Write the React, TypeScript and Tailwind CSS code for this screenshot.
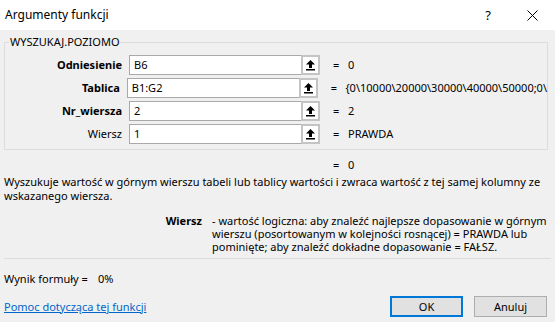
import type { ReactNode } from 'react'

const rows = [
  { label: 'Odniesienie', bold: true, value: 'B6', result: '0' },
  { label: 'Tablica', bold: true, value: 'B1:G2', result: '{0\\10000\\20000\\30000\\40000\\50000;0\\' },
  { label: 'Nr_wiersza', bold: true, value: '2', result: '2' },
  { label: 'Wiersz', bold: false, value: '1', result: 'PRAWDA' },
]

function CollapseIcon() {
  return (
    <svg width="11" height="12" viewBox="0 0 11 12" className="block">
      <path d="M5.5 1 L10 5.5 L7 5.5 L7 9 L4 9 L4 5.5 L1 5.5 Z" fill="#000" />
      <rect x="1" y="10" width="9" height="1.5" fill="#000" />
    </svg>
  )
}

function ArgRow({ label, bold, value, result }: { label: string; bold: boolean; value: string; result: ReactNode }) {
  return (
    <div className="flex items-center h-[20px]">
      <div className={`w-[124px] text-right pr-[7px] ${bold ? 'font-bold' : ''}`}>{label}</div>
      <div className="flex h-[20px]">
        <div className="w-[172px] h-full bg-white border border-[#a9a9a9] border-r-0 flex items-center px-[4px]">
          {value}
        </div>
        <div className="w-[19px] h-full bg-white border-2 border-[#c4c4c4] grid place-items-center">
          <CollapseIcon />
        </div>
      </div>
      <div className="pl-[13px] w-[28px]">=</div>
      <div className="whitespace-nowrap">{result}</div>
    </div>
  )
}

export default function App() {
  return (
    <div
      className="w-[555px] h-[322px] bg-[#f0f0f0] text-[11px] leading-[16px] text-black overflow-hidden"
      style={{ fontFamily: '"Noto Sans", "Liberation Sans", sans-serif' }}
    >
      <div className="h-[30px] bg-white flex items-center pl-[5px] text-[12px]">
        <div className="flex-1">Argumenty funkcji</div>
        <div className="w-[20px] mr-[11px] text-center text-[13px]">?</div>
        <div className="w-[46px] flex justify-center">
          <svg width="11" height="11" viewBox="0 0 11 11">
            <path d="M0.5 0.5 L10.5 10.5 M10.5 0.5 L0.5 10.5" stroke="#000" strokeWidth="1" />
          </svg>
        </div>
      </div>

      <div className="relative mt-[12px] ml-[4px] mr-[7px] h-[108px] border border-[#dcdcdc] pt-[12px]">
        <div className="absolute top-[-9px] left-[4px] bg-[#f0f0f0] px-[1px]">WYSZUKAJ.POZIOMO</div>
        <div className="flex flex-col gap-[3px]">
          {rows.map((r) => (
            <ArgRow key={r.label} {...r} />
          ))}
        </div>
      </div>

      <div className="flex mt-[7px] h-[16px]">
        <div className="w-[333px]" />
        <div className="w-[15px]">=</div>
        <div>0</div>
      </div>

      <div className="mt-[2px] pl-[4px] leading-[14px] whitespace-nowrap">
        Wyszukuje wartość w górnym wierszu tabeli lub tablicy wartości i zwraca wartość z tej samej kolumny ze
        <br />
        wskazanego wiersza.
      </div>

      <div className="flex mt-[11px] leading-[13px] whitespace-nowrap">
        <div className="w-[212px] text-right font-bold pr-[10px]">Wiersz</div>
        <div>
          - wartość logiczna: aby znaleźć najlepsze dopasowanie w górnym
          <br />
          wierszu (posortowanym w kolejności rosnącej) = PRAWDA lub
          <br />
          pominięte; aby znaleźć dokładne dopasowanie = FAŁSZ.
        </div>
      </div>

      <div className="mx-[4px] mt-[5px] border-t border-[#dcdcdc]" />

      <div className="flex pl-[4px] mt-[12px]">
        <div className="w-[94px]">Wynik formuły =</div>
        <div>0%</div>
      </div>

      <div className="flex items-center pl-[4px] mt-[9px] pr-[8px]">
        <a href="#" className="flex-1 text-[#0066cc] underline">Pomoc dotycząca tej funkcji</a>
        <button className="w-[73px] h-[21px] bg-[#e1e1e1] border-2 border-[#0078d7]">OK</button>
        <button className="w-[73px] h-[21px] bg-[#e1e1e1] border border-[#adadad] ml-[11px]">Anuluj</button>
      </div>
    </div>
  )
}
